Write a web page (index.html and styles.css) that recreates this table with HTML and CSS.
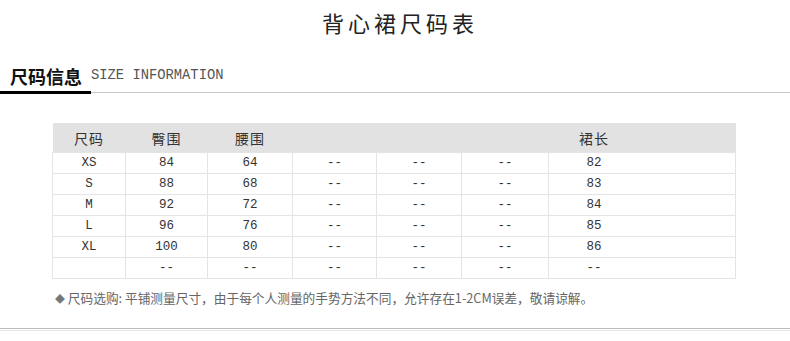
FILE: index.html
```html
<!DOCTYPE html>
<html lang="zh">
<head>
<meta charset="utf-8">
<title>背心裙尺码表</title>
<link rel="stylesheet" href="styles.css">
</head>
<body>
<div class="page">
  <h1 class="title">背心裙尺码表</h1>
  <div class="section-head">
    <span class="head-cn">尺码信息</span>
    <span class="head-en">SIZE INFORMATION</span>
  </div>
  <table class="size-table">
    <colgroup>
      <col class="c1"><col class="c2"><col class="c3"><col class="c4"><col class="c5"><col class="c6"><col class="c7">
    </colgroup>
    <thead>
      <tr><th>尺码</th><th>臀围</th><th>腰围</th><th></th><th></th><th></th><th class="last">裙长</th></tr>
    </thead>
    <tbody>
      <tr><td>XS</td><td>84</td><td>64</td><td>--</td><td>--</td><td>--</td><td class="last">82</td></tr>
      <tr><td>S</td><td>88</td><td>68</td><td>--</td><td>--</td><td>--</td><td class="last">83</td></tr>
      <tr><td>M</td><td>92</td><td>72</td><td>--</td><td>--</td><td>--</td><td class="last">84</td></tr>
      <tr><td>L</td><td>96</td><td>76</td><td>--</td><td>--</td><td>--</td><td class="last">85</td></tr>
      <tr><td>XL</td><td>100</td><td>80</td><td>--</td><td>--</td><td>--</td><td class="last">86</td></tr>
      <tr><td></td><td>--</td><td>--</td><td>--</td><td>--</td><td>--</td><td class="last">--</td></tr>
    </tbody>
  </table>
  <p class="note"><span class="diamond">◆</span> 尺码选购: 平铺测量尺寸，由于每个人测量的手势方法不同，允许存在1-2CM误差，敬请谅解。</p>
  <div class="bottom-rule"></div>
</div>
</body>
</html>
```

FILE: styles.css
```css
html, body {
  margin: 0;
  padding: 0;
  background: #fff;
}
.page {
  width: 790px;
  font-family: "Liberation Mono", "Noto Sans CJK SC", monospace;
  color: #333;
}
.title {
  margin: 0;
  padding: 7px 0 0 10px;
  height: 38px;
  line-height: 30px;
  text-align: center;
  font-family: "Noto Sans CJK SC", sans-serif;
  font-weight: 400;
  font-size: 22px;
  letter-spacing: 4px;
  color: #222;
}
.section-head {
  margin-top: 10px;
  display: flex;
  align-items: flex-end;
  border-bottom: 1px solid #c8c8c8;
  height: 37px;
}
.head-cn {
  padding: 0 9px 4px 10px;
  font-family: "Noto Sans CJK SC", sans-serif;
  font-weight: 700;
  font-size: 18px;
  line-height: 22px;
  color: #111;
  border-bottom: 3px solid #000;
  margin-bottom: -2px;
}
.head-en {
  padding-bottom: 8px;
  font-family: "Liberation Mono", monospace;
  font-size: 13.8px;
  line-height: 16px;
  color: #555;
}
.size-table {
  margin: 30px 0 0 52px;
  width: 683px;
  border-collapse: collapse;
  table-layout: fixed;
  font-size: 12.5px;
}
.c1 { width: 73px; }
.c2 { width: 82px; }
.c3 { width: 85px; }
.c4 { width: 84px; }
.c5 { width: 85px; }
.c6 { width: 87px; }
.c7 { width: 187px; }
.size-table th {
  height: 29px;
  padding: 0;
  background: #e2e2e2;
  font-family: "Noto Sans CJK SC", sans-serif;
  font-weight: 400;
  font-size: 14px;
  letter-spacing: 1px;
  color: #333;
  text-align: center;
  vertical-align: middle;
}
.size-table td {
  height: 20px;
  padding: 0;
  border: 1px solid #e4e4e4;
  text-align: center;
  vertical-align: middle;
  line-height: 20px;
  color: #333;
}
.size-table .last {
  padding-right: 96px;
}
.note {
  margin: 10px 0 0 55px;
  font-family: "Noto Sans CJK SC", sans-serif;
  font-size: 12.7px;
  line-height: 18px;
  color: #666;
}
.diamond {
  font-size: 10px;
  color: #777;
}
.bottom-rule {
  margin-top: 20px;
  height: 1px;
  border-top: 1px solid #bbb;
  border-bottom: 1px solid #e6e6e6;
}
```
